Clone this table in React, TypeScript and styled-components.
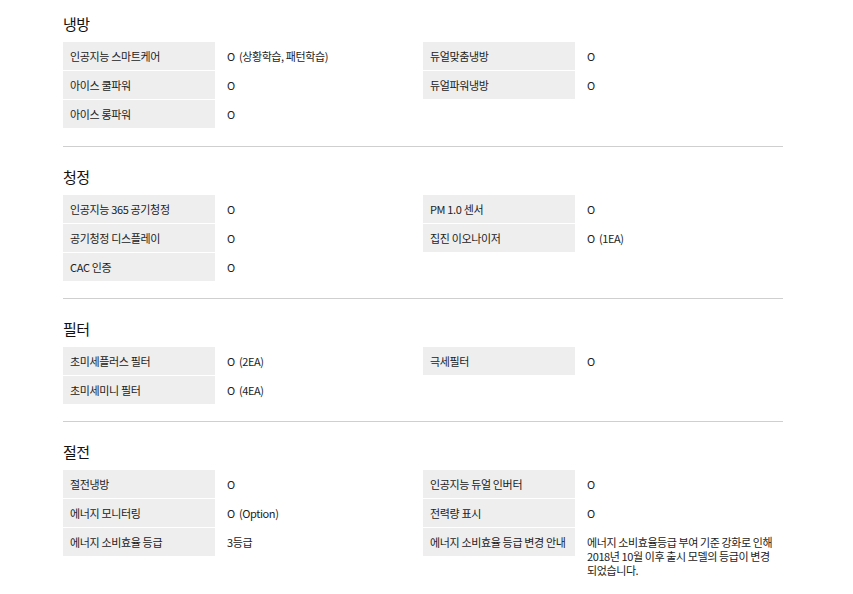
import React from 'react'
import styled, { createGlobalStyle } from 'styled-components'

type Spec = { label: string; value: string }
type Group = { title: string; items: Spec[] }

const groups: Group[] = [
    {
        title: '냉방',
        items: [
            { label: '인공지능 스마트케어', value: 'O\u00a0 (상황학습, 패턴학습)' },
            { label: '듀얼맞춤냉방', value: 'O' },
            { label: '아이스 쿨파워', value: 'O' },
            { label: '듀얼파워냉방', value: 'O' },
            { label: '아이스 롱파워', value: 'O' },
        ],
    },
    {
        title: '청정',
        items: [
            { label: '인공지능 365 공기청정', value: 'O' },
            { label: 'PM 1.0 센서', value: 'O' },
            { label: '공기청정 디스플레이', value: 'O' },
            { label: '집진 이오나이저', value: 'O\u00a0 (1EA)' },
            { label: 'CAC 인증', value: 'O' },
        ],
    },
    {
        title: '필터',
        items: [
            { label: '초미세플러스 필터', value: 'O\u00a0 (2EA)' },
            { label: '극세필터', value: 'O' },
            { label: '초미세미니 필터', value: 'O\u00a0 (4EA)' },
        ],
    },
    {
        title: '절전',
        items: [
            { label: '절전냉방', value: 'O' },
            { label: '인공지능 듀얼 인버터', value: 'O' },
            { label: '에너지 모니터링', value: 'O\u00a0 (Option)' },
            { label: '전력량 표시', value: 'O' },
            { label: '에너지 소비효율 등급', value: '3등급' },
            {
                label: '에너지 소비효율 등급 변경 안내',
                value: '에너지 소비효율등급 부여 기준 강화로 인해 2018년 10월 이후 출시 모델의 등급이 변경되었습니다.',
            },
        ],
    },
]

const App: React.FC = () => {
    return (
        <>
            <GlobalStyle />
            <Page>
                {groups.map((group) => (
                    <Section key={group.title}>
                        <Title>{group.title}</Title>
                        <SpecGrid>
                            {group.items.map((item) => (
                                <SpecRow key={item.label}>
                                    <Label>{item.label}</Label>
                                    <Value>{item.value}</Value>
                                </SpecRow>
                            ))}
                        </SpecGrid>
                    </Section>
                ))}
            </Page>
        </>
    )
}

export default App

const GlobalStyle = createGlobalStyle`
    body {
        margin: 0;
        background: #fff;
        font-family: "Noto Sans CJK KR", "Noto Sans", sans-serif;
        color: #222;
    }
`

const Page = styled.div`
    width: 720px;
    margin-left: 63px;
`

const Section = styled.section`
    padding: 20px 0 16px;
    border-bottom: 1px solid #cfcfcf;

    &:first-child {
        padding: 14px 0 17px;
    }

    &:last-child {
        border-bottom: none;
    }
`

const Title = styled.h3`
    margin: 0 0 8px;
    font-size: 15px;
    line-height: 20px;
    font-weight: 400;
    color: #111;
    letter-spacing: -0.5px;
`

const SpecGrid = styled.div`
    display: grid;
    grid-template-columns: 360px 360px;
`

const SpecRow = styled.div`
    display: flex;
    align-items: flex-start;
`

const Label = styled.div`
    flex: 0 0 152px;
    height: 29px;
    line-height: 28px;
    padding-left: 7px;
    box-sizing: border-box;
    background: #eeeeee;
    border-bottom: 1px solid #fff;
    font-size: 11px;
    letter-spacing: -0.35px;
    white-space: nowrap;
    color: #222;
`

const Value = styled.div`
    flex: 1;
    padding: 7px 8px 0 12px;
    font-size: 11px;
    line-height: 14px;
    letter-spacing: -0.4px;
    color: #222;
    word-break: break-all;
`
